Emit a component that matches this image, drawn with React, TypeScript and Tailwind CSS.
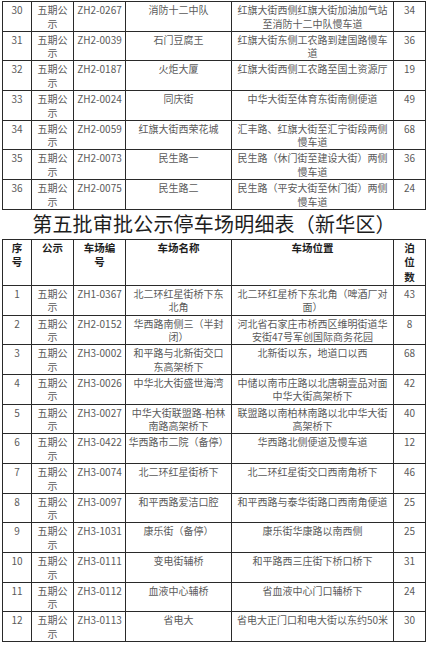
const font = { fontFamily: '"Noto Sans CJK SC", "Noto Sans", sans-serif' };

type Row = [string, string, string, string, string];

const batchRows: Row[] = [
  ["30", "ZH2-0267", "消防十二中队", "红旗大街西侧红旗大街加油加气站\n至消防十二中队慢车道", "34"],
  ["31", "ZH2-0039", "石门豆腐王", "红旗大街东侧工农路到建国路慢车\n道", "36"],
  ["32", "ZH2-0187", "火炬大厦", "红旗大街西侧工农路至国土资源厅", "19"],
  ["33", "ZH2-0024", "同庆街", "中华大街至体育东街南侧便道", "49"],
  ["34", "ZH2-0059", "红旗大街西荣花城", "汇丰路、红旗大街至汇宁街段两侧\n慢车道", "68"],
  ["35", "ZH2-0073", "民生路一", "民生路（休门街至建设大街）两侧\n慢车道", "36"],
  ["36", "ZH2-0075", "民生路二", "民生路（平安大街至休门街）两侧\n慢车道", "24"],
];

const xinhuaRows: Row[] = [
  ["1", "ZH1-0367", "北二环红星街桥下东\n北角", "北二环红星桥下东北角（啤酒厂对\n面）", "43"],
  ["2", "ZH2-0152", "华西路南侧三（半封\n闭）", "河北省石家庄市桥西区维明街道华\n安街47号军创国际商务花园", "8"],
  ["3", "ZH3-0002", "和平路与北新街交口\n东高架桥下", "北新街以东，地道口以西", "68"],
  ["4", "ZH3-0026", "中华北大街盛世海湾", "中储以南市庄路以北唐朝壹品对面\n中华大街高架桥下", "42"],
  ["5", "ZH3-0027", "中华大街联盟路-柏林\n南路高架桥下", "联盟路以南柏林南路以北中华大街\n高架桥下", "40"],
  ["6", "ZH3-0422", "华西路市二院（备停）", "华西路北侧便道及慢车道", "12"],
  ["7", "ZH3-0074", "北二环红星街桥下", "北二环红星街交口西南角桥下", "46"],
  ["8", "ZH3-0097", "和平西路爱洁口腔", "和平西路与泰华街路口西南角便道", "25"],
  ["9", "ZH3-1031", "康乐街（备停）", "康乐街华康路以南西侧", "25"],
  ["10", "ZH3-0111", "变电街辅桥", "和平路西三庄街下桥口桥下", "31"],
  ["11", "ZH3-0112", "血液中心辅桥", "省血液中心门口辅桥下", "24"],
  ["12", "ZH3-0113", "省电大", "省电大正门口和电大街以东约50米", "30"],
];

function Cell({ children }: { children: React.ReactNode }) {
  return (
    <div className="whitespace-pre-line border-r border-[#2a2a2a] px-[2px] pt-[1px] text-center">
      {children}
    </div>
  );
}

function DataRow({ row }: { row: Row }) {
  const [no, code, name, place, spots] = row;
  return (
    <div className="grid h-[29.7px] grid-cols-[29px_42px_52px_106px_162px_32px] border-b border-[#2a2a2a] text-[10px] leading-[13.6px] text-[#5a5a5a]">
      <Cell>{no}</Cell>
      <Cell>{"五期公\n示"}</Cell>
      <Cell>{code}</Cell>
      <Cell>
        <span className="whitespace-pre">{name}</span>
      </Cell>
      <Cell>{place}</Cell>
      <Cell>{spots}</Cell>
    </div>
  );
}

export default function App() {
  return (
    <div className="h-[646px] w-[428px] overflow-hidden bg-white px-[2px] pt-[1px]" style={font}>
      {/* tail of the previous batch */}
      <div className="w-[424px] border-l border-t border-[#2a2a2a]">
        {batchRows.map((r) => (
          <DataRow key={r[0] + r[1]} row={r} />
        ))}
      </div>

      <h1 className="flex h-[29px] items-center justify-center text-[20px] font-normal leading-none tracking-[0.2px] text-[#1e1e1e]">
        第五批审批公示停车场明细表（新华区）
      </h1>

      <div className="w-[424px] border-l border-t border-[#2a2a2a]">
        <div className="grid h-[46px] grid-cols-[29px_42px_52px_106px_162px_32px] border-b border-[#2a2a2a] text-[10.5px] font-bold leading-[14.5px] text-[#1e1e1e]">
          <Cell>{"序\n号"}</Cell>
          <Cell>公示</Cell>
          <Cell>{"车场编\n号"}</Cell>
          <Cell>车场名称</Cell>
          <Cell>车场位置</Cell>
          <Cell>{"泊\n位\n数"}</Cell>
        </div>
        {xinhuaRows.map((r) => (
          <DataRow key={r[1]} row={r} />
        ))}
      </div>
    </div>
  );
}
